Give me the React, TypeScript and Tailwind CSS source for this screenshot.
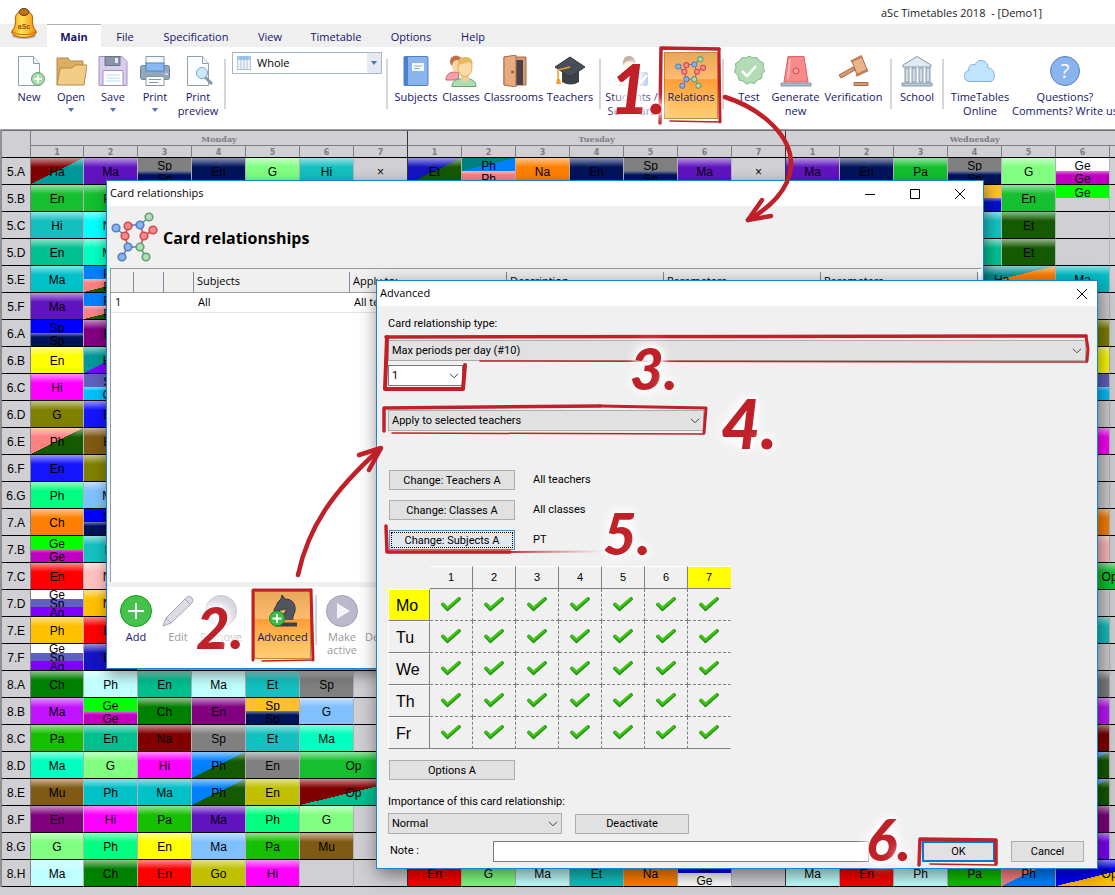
import React from 'react';
import clsx from 'clsx';

/* ---------- icons ---------- */

const BLUE = { fill: '#8ab4ee', stroke: '#5580c0' };
const RED = { fill: '#f78a8a', stroke: '#d04a50' };
const GREEN = { fill: '#b4dcb4', stroke: '#62a078' };

const MoleculeIcon: React.FC<{ className?: string }> = ({ className }) => {
  const nodes = [
    { x: 38, y: 5, c: GREEN }, { x: 29, y: 13, c: BLUE }, { x: 17, y: 14, c: RED }, { x: 5, y: 16, c: BLUE },
    { x: 14, y: 24, c: RED }, { x: 33, y: 24, c: RED }, { x: 42, y: 18, c: RED }, { x: 17, y: 35, c: BLUE },
    { x: 29, y: 35, c: GREEN }, { x: 11, y: 45, c: BLUE }, { x: 35, y: 45, c: GREEN },
  ];
  return (
    <svg viewBox="0 0 48 50" className={className} strokeWidth="1.6" fill="none">
      <path d="M38 5 29 13M29 35 35 45" stroke="#62a078" />
      <path d="M29 13H17M5 16l9 8M17 35l-6 10M17 35H29" stroke="#5580c0" />
      <path d="M17 14l-3 10 3 11M29 13l4 11-4 11M33 24l9-6" stroke="#d04a50" />
      {nodes.map((n) => (
        <circle key={`${n.x}-${n.y}`} cx={n.x} cy={n.y} r="3.8" fill={n.c.fill} stroke={n.c.stroke} />
      ))}
    </svg>
  );
};

const BellIcon = () => (
  <svg viewBox="0 0 28 32" className="h-8 w-7">
    <defs>
      <linearGradient id="bell" x1="0" x2="1" y1="0" y2="0">
        <stop offset="0" stopColor="#f59a00" />
        <stop offset="0.4" stopColor="#ffe45a" />
        <stop offset="1" stopColor="#f08a00" />
      </linearGradient>
    </defs>
    <ellipse cx="14" cy="28" rx="12" ry="3" fill="#b9b9b9" />
    <path d="M5.500 10c0-5 4-7 8.500-7s8.500 2 8.500 7c0 8 1 10 3.500 13 2 4-6 6.500-12 6.500S0 27 2 23c2.500-3 3.500-5 3.500-13z" fill="url(#bell)" stroke="#b05a10" />
    <path d="M2.500 24c5 3.500 18 3.500 23 0" fill="none" stroke="#c86a10" />
    <ellipse cx="14" cy="4" rx="5" ry="3.500" fill="#b8741a" stroke="#6a3a08" />
    <text x="14" y="21" textAnchor="middle" fontSize="7" fontWeight="700" fontFamily="Liberation Sans, sans-serif" fill="#a04a00">aSc</text>
  </svg>
);

const paper = (
  <path d="M5.500 1.500h15l6 7v22h-21z" fill="#fdfeff" stroke="#8f9fae" />
);
const fold = <path d="M20.500 1.500v7h6" fill="#eaf0f5" stroke="#8f9fae" />;

const icons: Record<string, React.ReactNode> = {
  New: (
    <>
      {paper}
      {fold}
      <circle cx="25" cy="24" r="6.500" fill="#a8dba8" stroke="#62a078" />
      <path d="M25 20v8M21 24h8" stroke="#fff" strokeWidth="1.6" />
    </>
  ),
  Open: (
    <>
      <path d="M2 30V3h11l2 3h13v6" fill="#dcae62" stroke="#b58a48" />
      <path d="M2 30 5 13h12l3-3h12l-3 20z" fill="#f2cc84" stroke="#b58a48" />
    </>
  ),
  Save: (
    <>
      <path d="M2 1.500h23l5 5v24H2z" fill="#d9ccec" stroke="#a592c2" />
      <path d="M8 1.500h15v9H8z" fill="#8b93a7" stroke="#6a7288" />
      <path d="M18 3h3v5h-3z" fill="#e5e9f1" />
      <path d="M6 15.500h20v15H6z" fill="#fff" stroke="#a592c2" />
      <path d="M9 20h14M9 23h14M9 26h14" stroke="#b9dcf6" />
    </>
  ),
  Print: (
    <>
      <path d="M7 9V1.500h18V9" fill="#f4f8fc" stroke="#8598a8" />
      <rect x="1.500" y="10.500" width="29" height="14" rx="2" fill="#93a8bc" stroke="#6d8296" />
      <rect x="7" y="8" width="18" height="8" fill="#8ab8f4" stroke="#5580c0" />
      <path d="M7 21.500h18v9H7z" fill="#fff" stroke="#8598a8" />
      <path d="M10 24.500h12M10 27.500h9" stroke="#8598a8" />
      <path d="M26 19h3" stroke="#fff" />
    </>
  ),
  'Print preview': (
    <>
      {paper}
      {fold}
      <path d="M23 22l7 7" stroke="#8598a8" strokeWidth="3" />
      <circle cx="20" cy="18" r="5.500" fill="#cdeafd" stroke="#7aa6cc" />
    </>
  ),
  Subjects: (
    <>
      <rect x="4" y="1.500" width="24" height="29" rx="1" fill="#8ab4ee" stroke="#5580c0" />
      <path d="M4 1.500h4v29H4z" fill="#4c80c8" />
      <path d="M12 8h12v8H12z" fill="#f4f8ff" />
      <path d="M14 11h8M14 13.500h6" stroke="#9ab0cc" />
    </>
  ),
  Classes: (
    <>
      <circle cx="11" cy="6.500" r="6" fill="#c0704a" />
      <path d="M1 25c0-6 4-8 9-8h4l-1 8z" fill="#f5a0a8" stroke="#d0606c" />
      <ellipse cx="12" cy="11" rx="5" ry="6" fill="#fbd8a0" />
      <path d="M7 31.500c0-6 5-8 12-8s12 2 12 8z" fill="#b0dcb4" stroke="#62a078" />
      <path d="M16 17h8v8q-4 3-8 0z" fill="#f6cc94" />
      <ellipse cx="20" cy="13" rx="7" ry="8.500" fill="#fbdca6" stroke="#e0b060" />
      <path d="M12.500 11c0-8 4-9 8-9s8 2 7 9l-3-4c-4 2-9 1-12 4z" fill="#e8b860" />
    </>
  ),
  Classrooms: (
    <>
      <path d="M6 2h22v28H6z" fill="#d49a72" stroke="#a86a48" />
      <path d="M10 5h15v25H10z" fill="#4e4048" />
      <path d="M6 2l12-2v32L6 30z" fill="#e8ab80" stroke="#a86a48" />
      <circle cx="14.500" cy="17" r="1.500" fill="#9a5a38" />
    </>
  ),
  Teachers: (
    <>
      <path d="M8 14h17v13q-8 5-17 0z" fill="#3c4048" />
      <path d="M16 2 31 12 16 22 1 12z" fill="#484e58" stroke="#30343c" />
      <path d="M16 12 4 15v11" fill="none" stroke="#f0a030" strokeWidth="1.5" />
      <path d="M3 24h3l1 5H2z" fill="#f0a030" />
    </>
  ),
  Students: (
    <>
      <path d="M3 31c0-8 5-9 9-9s9 1 9 9z" fill="#cfe8d2" />
      <ellipse cx="13" cy="10" rx="6" ry="8" fill="#f8e6cc" />
      <path d="M7 10c-1-6 3-9 6-9s8 3 6 9c-3-5-9-5-12 0z" fill="#b49a8a" />
      <rect x="20" y="17" width="12" height="14" rx="2" fill="#a9c6f0" />
      <path d="M22 24l3 3 6-7" fill="none" stroke="#fff" strokeWidth="2.500" />
    </>
  ),
  Test: (
    <>
      <path d="M16 1l4 2 4-.5 2.500 3.500 4 2-.5 4 1.500 4-2.500 3-.5 4.500-4 1.500-3 3.500-4-1-4 1.500-3.500-3-4-1-1-4.500L1.500 17l1.500-4-.5-4.500L6.500 6 9 2.500l4 .5z" fill="#b4dcb4" stroke="#7fb68b" />
      <path d="M9 16l5 5 9-10" fill="none" stroke="#fff" strokeWidth="2.500" />
    </>
  ),
  Generate: (
    <>
      <path d="M8 1.500h16L28 27H4z" fill="#f78a8a" stroke="#e06066" />
      <path d="M10 4 8 24" stroke="#fbb4b4" strokeWidth="2" />
      <circle cx="16" cy="16" r="3" fill="#f99a9a" stroke="#d04a50" />
      <path d="M1 28h30v3H1z" fill="#a9b9c7" stroke="#8598a8" />
    </>
  ),
  Verification: (
    <>
      <path d="M1 20 15 12l2 3L3 23z" fill="#d49a72" stroke="#a86a48" />
      <path d="M14 6 24 2l5 13-10 5z" fill="#eab48a" stroke="#a86a48" />
      <path d="M13 6.500 24 1M18 20.500l12-5.500" stroke="#c08058" strokeWidth="2.500" />
      <path d="M16 27.500h14v3H16z" fill="#d49a72" stroke="#a86a48" />
    </>
  ),
  School: (
    <>
      <path d="M2 10 16 1.500 30 10v2H2z" fill="#dfeaf3" stroke="#8598a8" />
      <path d="M4 13h4v14H4zM11 13h4v14h-4zM18 13h4v14h-4zM25 13h4v14h-4z" fill="#cfdbe8" stroke="#8598a8" />
      <path d="M1 28h30v3H1z" fill="#b9c8d6" stroke="#8598a8" />
    </>
  ),
  Cloud: (
    <path d="M6 26.500C-1.500 26.500-1.500 16 5 15.500 4 10 8 8.500 11 10c2-7 13-6 13 3 7-1 9 13.500 2 13.500z" fill="#c0e4fd" stroke="#7fb0dc" />
  ),
  Question: (
    <>
      <circle cx="16" cy="16" r="14.500" fill="#8ab4ee" stroke="#5580c0" />
      <text x="16" y="23" textAnchor="middle" fontSize="20" fontFamily="Open Sans, sans-serif" fill="#fff">?</text>
    </>
  ),
  Add: (
    <>
      <circle cx="16" cy="16" r="15.500" fill="#44c24c" stroke="#169a20" />
      <path d="M16 8v16M8 16h16" stroke="#fff" strokeWidth="2" />
    </>
  ),
  Edit: (
    <path d="M1 31l3-8L25 2q3-2 5 1t0 5L9 28zM23 4l5 5M4 23l5 5" fill="#dedbe6" stroke="#a9a5b8" />
  ),
  Remove: <circle cx="16" cy="16" r="15.500" fill="#d4d3de" stroke="#c3c1d0" />,
  Make: (
    <>
      <circle cx="16" cy="16" r="15.500" fill="#bdb9cc" stroke="#a4a0b6" />
      <path d="M11 8l13 8-13 8z" fill="#f4f4f8" />
    </>
  ),
  // chess knight with a plus badge
  Advanced: (
    <>
      <path d="M8 31.500h22v-4H8z" fill="#3c3f46" />
      <path d="M12 26c1-6 8-8 7-13-2 2-4 2-6 2l-3 3c-2 0-3-1-3-3l4-8 3-3 1-4 3 4c8 0 11 6 10 12-1 4-3 6-2 10z" fill="#50555e" stroke="#33363c" />
      <path d="M12 26h17" stroke="#f0a030" strokeWidth="2" />
      <circle cx="10" cy="23.500" r="7.500" fill="#3cbc48" stroke="#1a8a28" />
      <path d="M10 19v9M5.500 23.500h9" stroke="#fff" strokeWidth="2" />
    </>
  ),
};

const Icon: React.FC<{ name: string; className?: string }> = ({ name, className }) => (
  <svg viewBox="0 0 32 32" fill="none" className={clsx('h-8 w-8 shrink-0', className)}>{icons[name]}</svg>
);

const Chevron = () => (
  <svg viewBox="0 0 10 6" className="pointer-events-none col-start-1 row-start-1 mr-1 h-1.5 w-2.5 self-center justify-self-end" fill="none" stroke="#444">
    <path d="M1 .8 5 4.800 9 .8" />
  </svg>
);

const CloseIcon = () => (
  <svg viewBox="0 0 12 12" className="h-3 w-3" stroke="#000" fill="none"><path d="M1 1l10 10M11 1 1 11" /></svg>
);

/* ---------- ribbon ---------- */

const tabs = [
  { label: 'Main', width: 'w-[54px]' },
  { label: 'File', width: 'w-[48px]' },
  { label: 'Specification', width: 'w-[94px]' },
  { label: 'View', width: 'w-[54px]' },
  { label: 'Timetable', width: 'w-[78px]' },
  { label: 'Options', width: 'w-[72px]' },
  { label: 'Help', width: 'w-[52px]' },
];

interface RibbonButtonProps {
  icon: string;
  lines: string[];
  width: string;
  dropdown?: boolean;
}

const RibbonButton: React.FC<RibbonButtonProps> = ({ icon, lines, width, dropdown }) => (
  <button className={clsx('flex h-[70px] shrink-0 flex-col items-center pt-1 text-[#14146e]', width)}>
    <Icon name={icon} />
    <span className="mt-[3px] flex flex-col items-center text-[11px] leading-[14px] whitespace-nowrap">
      {lines.map((line) => <span key={line}>{line}</span>)}
    </span>
    {dropdown && <svg viewBox="0 0 6 4" className="mt-1 h-1 w-1.5" fill="#4a74b8"><path d="M0 0h6L3 4z" /></svg>}
  </button>
);

const Separator = () => <span className="mx-1 mt-2 h-[50px] w-0.5 shrink-0 bg-[#d6d6da]" />;

const Ribbon = () => (
  <header className="shrink-0 bg-white">
    <div className="flex h-6 items-center justify-end pt-0.5 pr-[73px] text-[11px] whitespace-pre text-[#222]">
      aSc Timetables 2018  - [Demo1]
    </div>
    <nav className="flex h-[23px] bg-[#efefef] pl-2.5">
      <div className="-mt-4 mr-[9px] h-8 w-7"><BellIcon /></div>
      {tabs.map((tab, i) => (
        <button
          key={tab.label}
          className={clsx(
            'h-full shrink-0 pt-[3px] text-[11px] text-[#14146e]',
            tab.width,
            i === 0 && 'border-t border-[#b0b0b0] bg-white font-bold',
          )}
        >
          {tab.label}
        </button>
      ))}
    </nav>
    <div className="flex h-[82px] pt-1 pl-2">
      <RibbonButton icon="New" lines={['New']} width="w-[42px]" />
      <RibbonButton icon="Open" lines={['Open']} width="w-[42px]" dropdown />
      <RibbonButton icon="Save" lines={['Save']} width="w-[42px]" dropdown />
      <RibbonButton icon="Print" lines={['Print']} width="w-[42px]" dropdown />
      <RibbonButton icon="Print preview" lines={['Print', 'preview']} width="w-[44px]" />
      <Separator />
      <div className="mt-px ml-0.5 flex h-[22px] w-[150px] shrink-0 items-center border border-[#a9b5cc] bg-white pl-1 text-[11px]">
        <svg viewBox="0 0 14 14" className="h-3.5 w-3.5">
          <path d="M0 0h14v14H0z" fill="#eef4fa" stroke="#8598a8" />
          <path d="M0 0h14v4H0z" fill="#9cc8f4" />
          <path d="M4 0v14M7 0v14M10 0v14" stroke="#9ab0c8" strokeWidth=".7" />
        </svg>
        <div className="ml-1.5 grid h-full flex-1">
          <select aria-label="View" className="col-start-1 row-start-1 appearance-none outline-none">
            <option>Whole</option>
          </select>
          <span className="pointer-events-none col-start-1 row-start-1 flex w-[14px] items-center justify-center justify-self-end bg-[#e6e9f2]">
            <svg viewBox="0 0 6 4" className="h-1 w-1.5" fill="#4a74b8"><path d="M0 0h6L3 4z" /></svg>
          </span>
        </div>
      </div>
      <Separator />
      <RibbonButton icon="Subjects" lines={['Subjects']} width="w-[48px]" />
      <RibbonButton icon="Classes" lines={['Classes']} width="w-[42px]" />
      <RibbonButton icon="Classrooms" lines={['Classrooms']} width="w-[63px]" />
      <RibbonButton icon="Teachers" lines={['Teachers']} width="w-[50px]" />
      <Separator />
      <RibbonButton icon="Students" lines={['Students /', 'Seminars']} width="w-[53px]" />
      <button className="mt-px ml-1.5 flex h-[67px] w-[54px] shrink-0 flex-col items-center border border-[#c88830] bg-[linear-gradient(#e8a858,#ffba70_40%,#ff9c38_41%,#ffc060_80%,#ffcc78)] pt-0.5 text-[11px] text-[#14146e]">
        <MoleculeIcon className="h-[35px] w-8" />
        <span className="leading-[14px]">Relations</span>
      </button>
      <Separator />
      <RibbonButton icon="Test" lines={['Test']} width="w-[42px]" />
      <RibbonButton icon="Generate" lines={['Generate', 'new']} width="w-[51px]" />
      <RibbonButton icon="Verification" lines={['Verification']} width="w-[65px]" />
      <Separator />
      <RibbonButton icon="School" lines={['School']} width="w-[42px]" />
      <Separator />
      <RibbonButton icon="Cloud" lines={['TimeTables', 'Online']} width="w-[64px]" />
      <RibbonButton icon="Question" lines={['Questions?', 'Comments? Write us']} width="w-[106px]" />
    </div>
  </header>
);

/* ---------- timetable ---------- */

// Cell notation: "label color", "/color" adds a diagonal half, "|" stacks
// lessons of split groups and a trailing "*2" makes a double lesson.
const spGroups = 'Sp #808080|Sp #00145a';
const geGroups = 'Ge #00ff00|Ge #c000c0';
const phGroups = 'Ph #0080ff|Ph #ff8080/#145a00';
const threeGroups = 'Ge #ffffff|Sp #6060c0|Ag #8000ff';
const phDiag = 'Ph #0080ff/#145a00';

const rows: { name: string; mon: string[]; tue?: string[]; wed?: string[] }[] = [
  {
    name: '5.A',
    mon: ['Ha #800000/#009898', 'Ma #6014c0', spGroups, 'En #00145a', 'G #80ff80', 'Hi #14c0c0', '×'],
    tue: ['Et #1414c0/#145a00', 'Ph #008080/#0080ff|Ph #ff8080', 'Na #ff8000', 'En #00145a', spGroups, 'Ma #6014c0', '×'],
    wed: ['Ma #6014c0', 'En #00145a', 'Pa #14c030', spGroups, 'G #80ff80', 'Ge #ffffff|Ge #c000c0'],
  },
  { name: '5.B', mon: ['En #14c030', 'Pa #14c030'], wed: ['', '', '', 'Sp #ffc030|Sp #0010c8', 'En #14c030', 'Ge #00ff00|'] },
  { name: '5.C', mon: ['Hi #14c0c0', 'Na #00ffff'], wed: ['', '', '', 'Hi #14c0c0', 'Et #145a00'] },
  { name: '5.D', mon: ['En #00c090', 'Ma #00ffc0'], wed: ['', '', '', 'En #00c090', 'Et #145a00'] },
  { name: '5.E', mon: ['Ma #00c0c8', phGroups], wed: ['', '', '', 'Ha #009898/#ff8000*2', 'Ma #00c0c8'] },
  { name: '5.F', mon: ['Ma #6014c0', phGroups] },
  { name: '6.A', mon: ['Sp #0000ff|Sp #00145a', 'En #800080'], wed: ['', '', '', '', '', 'G #808000'] },
  { name: '6.B', mon: ['En #ffff00', 'Ha #009898/#8000ff'], wed: ['', '', '', '', '', 'En #ffff00'] },
  { name: '6.C', mon: ['Hi #ff00ff', 'Sp #6060c0|Ge #00c0ff'], wed: ['', '', '', '', '', 'Sp #6060c0|Ge #00c0ff'] },
  { name: '6.D', mon: ['G #808000', 'En #1414ff'] },
  { name: '6.E', mon: ['Ph #ff8080/#145a00', 'En #805a14'], wed: ['', '', '', '', '', 'Hi #ff00ff'] },
  { name: '6.F', mon: ['En #1414ff', 'G #808000'] },
  { name: '6.G', mon: ['Ph #00ff80', 'Ma #80c0ff'] },
  { name: '7.A', mon: ['Ch #ff8000', 'Sp #0000ff|Sp #00145a'], wed: ['', '', '', '', '', 'Ch #ff8000'] },
  { name: '7.B', mon: [geGroups, 'Hi #14c0c0'], wed: ['', '', '', '', '', 'Na #ffb9b9'] },
  { name: '7.C', mon: ['En #ff0000', 'Na #ffc0c0'], wed: ['', '', '', '', '', 'Op #14c030*2'] },
  { name: '7.D', mon: [threeGroups, 'Na #ffc000'] },
  { name: '7.E', mon: ['Ph #ffc000', 'En #ff0000'], wed: ['', '', '', '', '', 'Hi #14c0c0'] },
  { name: '7.F', mon: [threeGroups, 'En #1414c0'] },
  { name: '8.A', mon: ['Ch #008000', 'Ph #c0ffff', 'En #00c090', 'Ma #c0ffff', 'Et #14c0c0', 'Sp #808080'], wed: ['', '', '', '', '', 'Sp #808080'] },
  { name: '8.B', mon: ['Ma #c014ff', geGroups, 'Ch #008000', 'En #800080', 'Sp #ffc030|Sp #00145a', 'G #80c0ff'], wed: ['', '', '', '', '', 'Ma #c014ff'] },
  { name: '8.C', mon: ['Pa #14c000', 'En #00c090', 'Na #800000', 'Sp #808080', 'Et #14c0c0', 'Ma #00ffc0'], wed: ['', '', '', '', '', 'Na #800000'] },
  { name: '8.D', mon: ['Ma #00ffc0', 'G #80ff80', 'Hi #ff00ff', phDiag, 'En #808080', 'Op #14c030*2'], wed: ['', '', '', '', '', phDiag] },
  { name: '8.E', mon: ['Mu #805a14', 'Ph #00c0c8', 'Ma #00c0c8', phDiag, 'En #c0c000', 'Op #800000/#00c090*2'], wed: ['', '', '', '', '', phDiag] },
  { name: '8.F', mon: ['En #800080', 'Hi #ff00ff', 'Pa #14c000', 'Ma #6014c0', 'Ph #00ff80', 'G #80ff80'], wed: ['', '', '', '', '', 'En #800080'] },
  { name: '8.G', mon: ['G #80ff80', 'Ph #00ff80', 'En #ffff00', 'Ma #80c0ff', 'Pa #14c000', 'Mu #805a14'], wed: ['', '', '', '', '', 'Ag #8000ff'] },
  {
    name: '8.H',
    mon: ['Ma #c0ffff', 'Ch #008000', 'En #ff0000', 'Go #c0c000', 'Hi #ff00ff'],
    tue: ['En #ff0000', 'G #80ff80', 'Ma #c0ffff', 'Et #14c0c0', 'Na #ff8000', 'Sp #0000ff|Ge #ffffff'],
    wed: ['Ma #c0ffff', 'En #ff0000', 'Ph #c0ffff', 'Pa #14c000', 'Ph #ff8080/#0080ff', 'Op #0000ff/#ffc000*2'],
  },
];

const GLOSS = 'linear-gradient(rgba(255,255,255,.55), rgba(255,255,255,0) 9px)';
const SMALL_GLOSS = 'linear-gradient(rgba(255,255,255,.45), rgba(255,255,255,0) 4px)';

const Lesson: React.FC<{ spec: string; gloss?: string }> = ({ spec, gloss }) => {
  const [label, colors = ''] = spec.split(' ');
  const [first, second] = colors.split('/');
  const fill = second
    ? `linear-gradient(to bottom right, ${first} 50%, ${second} 50%)`
    : `linear-gradient(${first}, ${first})`;
  return (
    <div
      className="flex min-h-0 flex-1 basis-0 items-center justify-center overflow-hidden pt-0.5"
      style={first ? { backgroundImage: gloss ? `${gloss}, ${fill}` : fill } : undefined}
    >
      {label}
    </div>
  );
};

const DayCells: React.FC<{ cells?: string[] }> = ({ cells = [] }) => {
  const out: React.ReactNode[] = [];
  let period = 0;
  while (period < 7) {
    const raw = cells[out.length] ?? '';
    const span = raw.endsWith('*2') ? 2 : 1;
    const parts = raw.replace('*2', '').split('|');
    const last = period + span === 7;
    out.push(
      <td key={period} colSpan={span} className={clsx('border-r border-b border-b-black p-0', last ? 'border-r-[#333]' : 'border-r-[#b2b2b6]')}>
        <div className="flex h-[26px] flex-col leading-none">
          {parts.map((part, i) => (
            <Lesson
              key={i}
              spec={part}
              gloss={parts.length === 1 ? GLOSS : parts.length === 2 && i === 1 ? SMALL_GLOSS : undefined}
            />
          ))}
        </div>
      </td>,
    );
    period += span;
  }
  return <>{out}</>;
};

const days = ['Monday', 'Tuesday', 'Wednesday'];
const periods = [1, 2, 3, 4, 5, 6, 7];

const Timetable = () => (
  <table className="w-[1162px] table-fixed border-separate border-spacing-0 border-t border-[#707070] text-[12px] text-black">
    <colgroup>
      <col className="w-[29px]" />
      <col className="w-[53px]" />
      {Array.from({ length: 20 }, (_, i) => <col key={i} className="w-[54px]" />)}
    </colgroup>
    <thead className="font-['DejaVu_Sans'] text-[8px] leading-none text-[#7c7c80]">
      <tr>
        <th rowSpan={2} className="border-r border-b border-r-[#808084] border-b-black p-0" />
        {days.map((day) => (
          <th key={day} colSpan={7} className="h-[15px] border-r border-b border-r-[#333] border-b-[#808084] p-0 pt-0.5 font-['DejaVu_Serif']">{day}</th>
        ))}
      </tr>
      <tr>
        {days.map((day) => periods.map((p) => (
          <th
            key={day + p}
            className={clsx('h-[12px] border-r border-b border-b-black p-0 pt-0.5', p === 7 ? 'border-r-[#333]' : 'border-r-[#808084]')}
          >
            {p}
          </th>
        )))}
      </tr>
    </thead>
    <tbody>
      {rows.map((row) => (
        <tr key={row.name}>
          <th className="h-[27px] border-r border-b border-r-[#808084] border-b-black p-0 pt-0.5 font-normal">{row.name}</th>
          <DayCells cells={row.mon} />
          <DayCells cells={row.tue} />
          <DayCells cells={row.wed} />
        </tr>
      ))}
    </tbody>
  </table>
);

/* ---------- card relationships window ---------- */

const listColumns = [
  { label: '', width: 'w-[23px]' },
  { label: '', width: 'w-[30px]' },
  { label: '', width: 'w-[30px]' },
  { label: 'Subjects', width: 'w-[156px]' },
  { label: 'Apply to:', width: 'w-[157px]' },
  { label: 'Description', width: 'w-[157px]' },
  { label: 'Parameters', width: 'w-[157px]' },
  { label: 'Parameters', width: 'w-[157px]' },
];

const ToolButton: React.FC<{ icon: string; lines: string[]; width: string; disabled?: boolean }> = ({ icon, lines, width, disabled }) => (
  <button
    disabled={disabled}
    className={clsx('flex shrink-0 flex-col items-center pt-2', width, disabled ? 'text-[#9a9a9a]' : 'text-[#14146e]')}
  >
    <Icon name={icon} />
    <span className="mt-[3px] flex flex-col text-[11px] leading-[13px] whitespace-nowrap">
      {lines.map((line) => <span key={line}>{line}</span>)}
    </span>
  </button>
);

const RelationshipsWindow = () => (
  <section className="absolute top-[50px] left-[106px] flex w-[878px] flex-col border border-[#1883d7] bg-[#f0f0f0] shadow-[2px_5px_14px_rgba(0,0,0,.45)]">
    <div className="flex h-[25px] items-center bg-white pl-[3px] text-[11px]">
      <span className="flex-1">Card relationships</span>
      <button aria-label="Minimize" className="flex w-[45px] justify-center">
        <svg viewBox="0 0 10 10" className="h-2.5 w-2.5" stroke="#000"><path d="M0 5.500h10" /></svg>
      </button>
      <button aria-label="Maximize" className="flex w-[45px] justify-center">
        <svg viewBox="0 0 10 10" className="h-2.5 w-2.5" stroke="#000" fill="none"><path d="M.5.5h9v9h-9z" /></svg>
      </button>
      <button aria-label="Close" className="flex w-[46px] justify-center"><CloseIcon /></button>
    </div>
    <div className="flex h-[62px] items-center gap-1 pl-[4px]">
      <MoleculeIcon className="h-[50px] w-12" />
      <h2 className="pt-0.5 text-[16px] font-bold">Card relationships</h2>
    </div>
    <div className="mr-0.5 mb-[5px] ml-[3px] h-[314px] border-t border-l border-[#9a9a9a] bg-white text-[11px]">
      <table className="table-fixed border-separate border-spacing-0">
        <thead>
          <tr>
            {listColumns.map((col, i) => (
              <th key={i} className={clsx('h-6 border-b border-[#a0a0a0] bg-[#f0f0f0] p-0 text-left font-normal', col.width)}>
                <div className="mt-0.5 h-5 border-r border-[#8484a0] pl-[3px] leading-[18px]">{col.label}</div>
              </th>
            ))}
          </tr>
        </thead>
        <tbody>
          <tr>
            {['1', '', '', 'All', 'All teachers', '', '', ''].map((value, i) => (
              <td key={i} className="h-5 border-b border-[#e6e6de] p-0 pl-1">{value}</td>
            ))}
          </tr>
        </tbody>
      </table>
    </div>
    <div className="flex h-[81px] bg-white pl-[8px]">
      <ToolButton icon="Add" lines={['Add']} width="w-[42px]" />
      <ToolButton icon="Edit" lines={['Edit']} width="w-[42px]" disabled />
      <ToolButton icon="Remove" lines={['Remove']} width="w-[44px]" disabled />
      <button className="mt-[4px] ml-[11px] flex h-[68px] w-[57px] shrink-0 flex-col items-center border border-[#c88830] bg-[linear-gradient(#e8a858,#ffba70_40%,#ff9c38_41%,#ffc060_80%,#ffcc78)] pt-[3px] text-[11px] text-[#14146e]">
        <Icon name="Advanced" />
        <span className="mt-0.5 leading-4">Advanced</span>
      </button>
      <Separator />
      <ToolButton icon="Make" lines={['Make', 'active']} width="w-[42px]" disabled />
      <ToolButton icon="Make" lines={['Deactivate']} width="w-[58px]" disabled />
    </div>
  </section>
);

/* ---------- advanced window ---------- */

interface ComboProps {
  id?: string;
  label?: string;
  value: string;
  width: string;
  light?: boolean;
}

const Combo: React.FC<ComboProps> = ({ id, label, value, width, light }) => (
  <div className={clsx('grid h-[21px]', width)}>
    <select
      id={id}
      aria-label={label}
      className={clsx(
        'col-start-1 row-start-1 appearance-none border pt-0.5 pl-[3px] text-[11px] outline-none',
        light ? 'border-[#7a7a7a] bg-white' : 'border-[#adadad] bg-[#e1e1e1]',
      )}
    >
      <option>{value}</option>
    </select>
    <Chevron />
  </div>
);

const PushButton: React.FC<{ width: string; className?: string; children: React.ReactNode }> = ({ width, className, children }) => (
  <button className={clsx('h-5 shrink-0 border text-[11px] leading-none', width, className ?? 'border-[#adadad] bg-[#e1e1e1]')}>
    {children}
  </button>
);

const weekdays = ['Mo', 'Tu', 'We', 'Th', 'Fr'];

const PeriodGrid = () => (
  <table className="mt-4 w-[343px] table-fixed border-separate border-spacing-0 font-['Liberation_Sans']">
    <thead>
      <tr className="text-[11px]">
        <th className="w-[42px] p-0" />
        {periods.map((p) => (
          <th
            key={p}
            className={clsx(
              'h-[23px] w-[43px] border-t border-r border-b border-t-white border-b-[#808080] p-0 font-normal',
              p === 7 ? 'border-r-transparent bg-[#ffff00]' : 'border-r-[#808080]',
            )}
          >
            {p}
          </th>
        ))}
      </tr>
    </thead>
    <tbody>
      {weekdays.map((day, i) => {
        const lastRow = i === weekdays.length - 1;
        return (
          <tr key={day}>
            <th
              className={clsx(
                'h-8 border-t border-r border-b border-l border-t-white border-r-[#808080] border-b-[#808080] border-l-white p-0 pt-0.5 pl-[7px] text-left text-[16px] font-normal',
                i === 0 && 'bg-[#ffff00]',
              )}
            >
              {day}
            </th>
            {periods.map((p) => (
              <td
                key={p}
                className={clsx(
                  'border-r border-b p-0',
                  lastRow ? 'border-b-[#808080]' : 'border-b-[#808080] [border-bottom-style:dashed]',
                  p === 7 ? 'border-r-transparent' : 'border-r-[#808080] [border-right-style:dashed]',
                )}
              >
                <label className="relative flex h-[31px] items-center justify-center pb-px">
                  <input type="checkbox" defaultChecked aria-label={`${day} ${p}`} className="peer sr-only" />
                  <svg viewBox="0 0 20 16" className="invisible h-4 w-5 peer-checked:visible" fill="none" strokeLinecap="round">
                    <path d="M2 8.500 6.500 13 18 3" stroke="#1f8a10" strokeWidth="3.6" />
                    <path d="M2 8 6.500 12 17.500 2.700" stroke="#38c80c" strokeWidth="2.4" />
                  </svg>
                </label>
              </td>
            ))}
          </tr>
        );
      })}
    </tbody>
  </table>
);

const AdvancedWindow = () => (
  <section className="absolute top-[150px] left-[376px] w-[722px] border border-[#1883d7] bg-[#f0f0f0] font-['Roboto',sans-serif] text-[11px] shadow-[2px_5px_18px_rgba(0,0,0,.5)]">
    <div className="flex h-[25px] items-center justify-between bg-white pr-[9px] pl-[3px] font-['Open_Sans']">
      <span>Advanced</span>
      <button aria-label="Close"><CloseIcon /></button>
    </div>
    <div className="px-[11px] pt-[10px] pb-[6px]">
      <label htmlFor="type" className="mb-2 block leading-4">Card relationship type:</label>
      <Combo id="type" value="Max periods per day (#10)" width="w-full" />
      <div className="mt-1"><Combo label="Periods" value="1" width="w-[75px]" light /></div>
      <div className="mt-6"><Combo label="Applies to" value="Apply to selected teachers" width="w-[316px]" /></div>
      <div className="mt-[39px] flex flex-col gap-[10px] pl-px">
        <div className="flex items-center gap-[18px]">
          <PushButton width="w-[126px]">Change: Teachers A</PushButton>
          <span>All teachers</span>
        </div>
        <div className="flex items-center gap-[18px]">
          <PushButton width="w-[126px]">Change: Classes A</PushButton>
          <span>All classes</span>
        </div>
        <div className="flex items-center gap-[18px]">
          <PushButton width="w-[126px]" className="border-[#4a90c8] bg-[#e1e8f0] p-px">
            <span className="flex h-full items-center justify-center border border-dotted border-black">Change: Subjects A</span>
          </PushButton>
          <span>PT</span>
        </div>
      </div>
      <PeriodGrid />
      <div className="mt-[11px] flex pl-px">
        <PushButton width="w-[126px]">Options A</PushButton>
      </div>
      <label htmlFor="importance" className="mt-[14px] mb-[3px] block leading-4">Importance of this card relationship:</label>
      <div className="flex items-center gap-[13px]">
        <Combo id="importance" value="Normal" width="w-[174px]" />
        <PushButton width="w-[114px]">Deactivate</PushButton>
      </div>
      <div className="mt-[7px] flex items-center pr-0.5">
        <label htmlFor="note" className="w-[105px] pl-0.5">Note :</label>
        <input id="note" className="h-[21px] w-[376px] border border-[#7a7a7a] bg-white px-1 outline-none" />
        <div className="ml-auto flex gap-4">
          <button className="h-[21px] w-[73px] border-2 border-[#0078d7] bg-[#e1e1e1] leading-none">OK</button>
          <button className="h-[21px] w-[73px] border border-[#adadad] bg-[#e1e1e1] leading-none">Cancel</button>
        </div>
      </div>
    </div>
  </section>
);

/* ---------- tutorial marks ---------- */

const steps = [
  { n: 1, place: 'top-[54px] left-[610px] text-[68px]' },
  { n: 2, place: 'top-[598px] left-[196px] text-[58px]' },
  { n: 3, place: 'top-[339px] left-[630px] text-[58px]' },
  { n: 4, place: 'top-[389px] left-[721px] text-[68px]' },
  { n: 5, place: 'top-[504px] left-[603px] text-[58px]' },
  { n: 6, place: 'top-[810px] left-[866px] text-[58px]' },
];

const Annotations = () => (
  <div className="pointer-events-none absolute inset-0 overflow-hidden">
    <svg className="absolute top-0 left-0 h-[895px] w-[1115px]" viewBox="0 0 1115 895" fill="none" stroke="#c02028" strokeLinecap="round" strokeLinejoin="round">
      <defs>
        <linearGradient id="fade" gradientUnits="userSpaceOnUse" x1="500" x2="602" y1="0" y2="0">
          <stop offset="0" stopColor="#c02028" />
          <stop offset="1" stopColor="#c02028" stopOpacity="0" />
        </linearGradient>
      </defs>
      <g strokeWidth="3.500">
        <path d="M660 123 661 48 719 49" />
        <path d="M253 660V590H311" strokeWidth="3" />
        <path d="M387 337 385 389 463 389 465 365" strokeWidth="4" />
        <path d="M386 337 1086 336M384 431V408L600 406" />
        <path d="M386 526 387 552H510" />
        <path d="M919 865 920 839 996 840 996 864" />
      </g>
      <path d="M719 49 720 122M311 590 313 660M600 406 706 408 704 433M1086 336 1088 349 1087 361" strokeWidth="3" />
      <path d="M720 122 670 121M313 660 262 661M704 434 392 433M1087 362 480 361M996 865 930 864" strokeWidth="1.5" />
      <path d="M510 552 602 551.500" stroke="url(#fade)" strokeWidth="2" />
      <g strokeWidth="4.500">
        <path d="M725 97C765 110 792 138 791 165 790 190 768 209 748 220" />
        <path d="M762 200 748 220 771 216" />
        <path d="M298 575C308 528 332 492 380 449" />
        <path d="M359 455 381 448 369 470" />
      </g>
    </svg>
    {steps.map((step) => (
      <span
        key={step.n}
        className={clsx(
          "absolute font-['Lato'] leading-none font-black text-[#c02028] italic [text-shadow:0_0_6px_#fff,0_0_10px_#fff,0_0_14px_#fff,0_0_18px_#fff]",
          step.place,
        )}
      >
        {step.n}.
      </span>
    ))}
  </div>
);

const App: React.FC = () => (
  <div className="relative flex min-h-screen flex-col overflow-hidden bg-[#d0cfd4] font-['Open_Sans',sans-serif] text-black">
    <Ribbon />
    <main className="relative flex-1 border-t border-[#a0a0a0]">
      <div className="h-full border-l-2 border-[#909090] font-['Liberation_Sans']">
        <Timetable />
      </div>
      <RelationshipsWindow />
      <AdvancedWindow />
    </main>
    <Annotations />
  </div>
);

export default App;
